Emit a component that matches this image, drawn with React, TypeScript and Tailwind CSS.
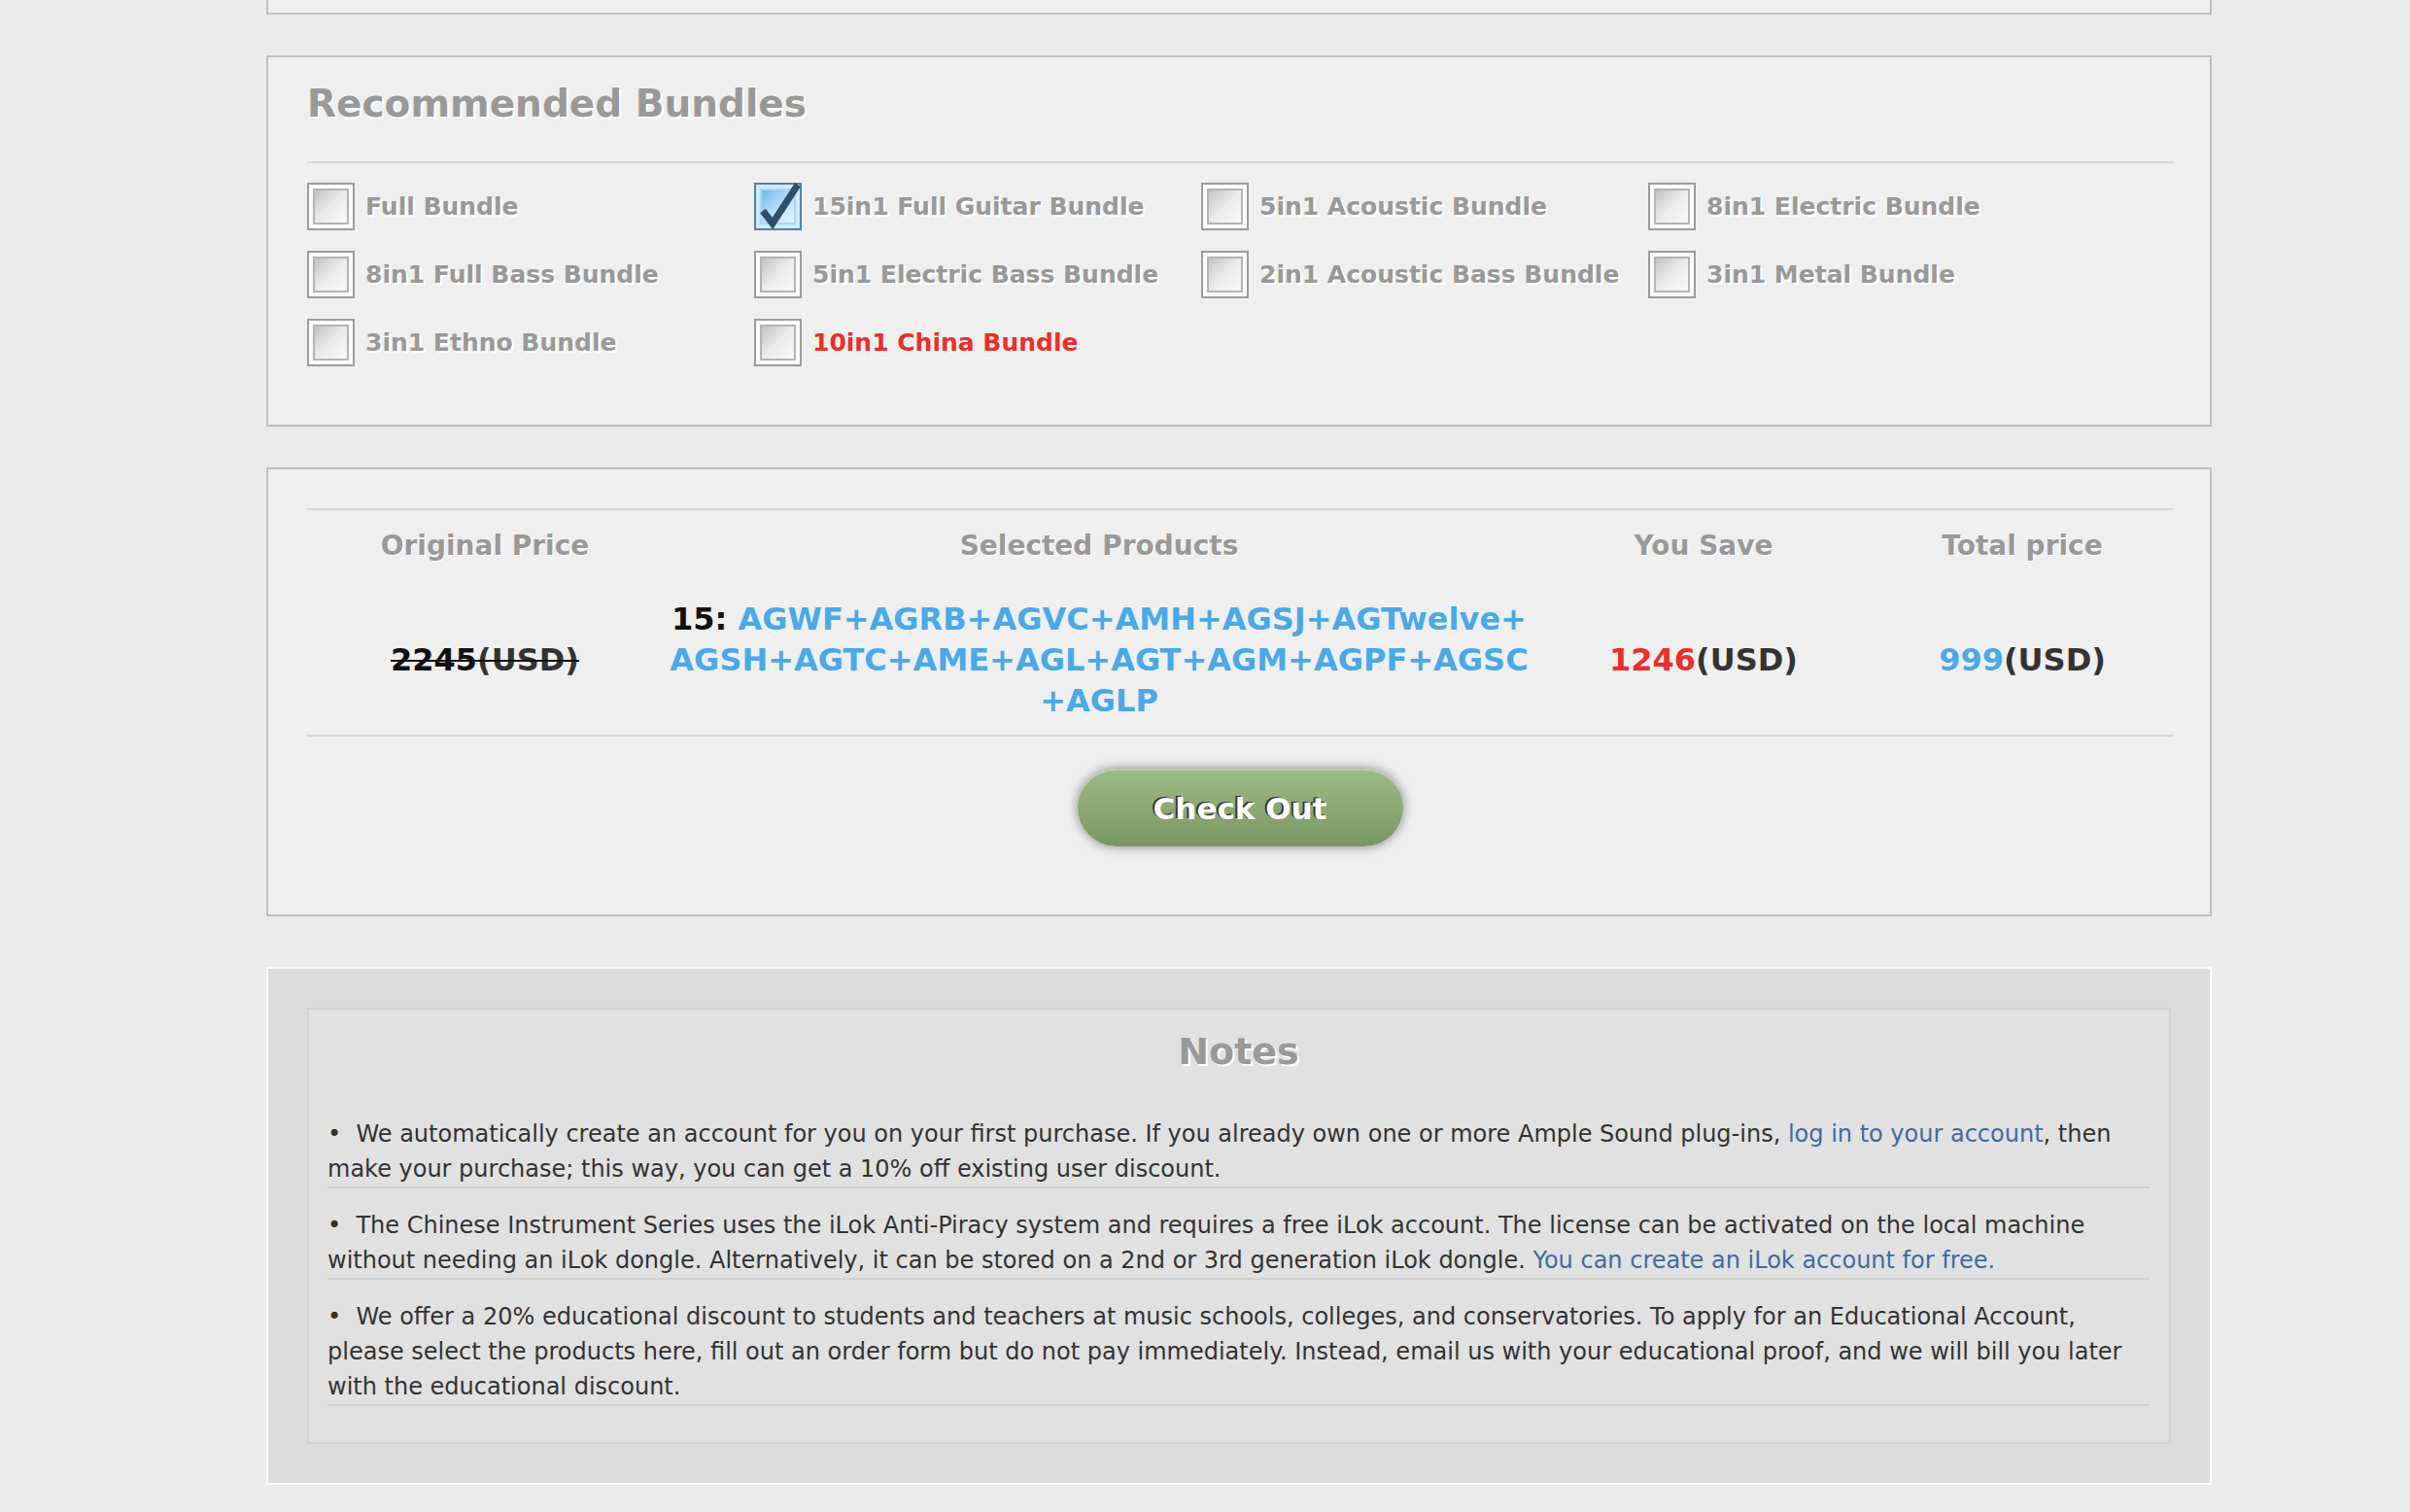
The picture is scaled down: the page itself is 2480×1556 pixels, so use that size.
import React from 'react'

type Bundle = { name: string; checked?: boolean; red?: boolean }

const BUNDLES: Bundle[] = [
  { name: 'Full Bundle' },
  { name: '15in1 Full Guitar Bundle', checked: true },
  { name: '5in1 Acoustic Bundle' },
  { name: '8in1 Electric Bundle' },
  { name: '8in1 Full Bass Bundle' },
  { name: '5in1 Electric Bass Bundle' },
  { name: '2in1 Acoustic Bass Bundle' },
  { name: '3in1 Metal Bundle' },
  { name: '3in1 Ethno Bundle' },
  { name: '10in1 China Bundle', red: true },
]

function Checkbox({ checked }: { checked?: boolean }) {
  if (checked) {
    return (
      <div className="relative h-[49px] w-[49px] shrink-0 border-2 border-[#5b7f9e] bg-[#cfe9fb] p-[4px]">
        <div className="h-full w-full border-2 border-[#a9d6f5] bg-gradient-to-br from-[#6fb6ef] via-[#b5dcfa] to-[#e6f6ff]" />
        <svg className="absolute -top-[6px] left-[2px] h-[52px] w-[46px]" viewBox="0 0 46 52" fill="none">
          <path d="M5 33 L15 46 L41 6" stroke="#2f4e6a" strokeWidth="7" strokeLinejoin="miter" strokeLinecap="butt" />
        </svg>
      </div>
    )
  }
  return (
    <div className="h-[49px] w-[49px] shrink-0 border-2 border-[#9c9c9c] bg-[#fbfbfb] p-[4px]">
      <div className="h-full w-full border-2 border-[#b4b4b4] bg-gradient-to-br from-[#c2c2c2] via-[#ececec] to-[#f8f8f8]" />
    </div>
  )
}

const NOTES_TEXT = 'text-[24px] leading-[36px] text-[#333]'
const LINK = 'text-[#3d6ca6]'

export default function App() {
  return (
    <div className="min-h-screen bg-[#ebebeb] pl-[274px] [font-family:'DejaVu_Sans',Verdana,sans-serif]">
      <div className="w-[2002px]">
        {/* previous panel (cut off) */}
        <div className="h-[15px] border-x-2 border-b-2 border-[#c0c0c0] bg-[#efefef]" />

        {/* Recommended bundles */}
        <div className="mt-[42px] border-2 border-[#bfbfbf] bg-[#efefef] pb-[60px] pl-[40px] pr-[36px] pt-[22px]">
          <h2 className="text-[39px] font-bold leading-[52px] text-[#999] [text-shadow:2px_2px_0_#fff]">Recommended Bundles</h2>
          <div className="mt-[33px] h-[2px] bg-[#d7d7d7]" />
          <div className="mt-[20px] grid grid-cols-[repeat(4,460px)] gap-y-[21px]">
            {BUNDLES.map(b => (
              <label key={b.name} className="flex items-center gap-[11px]">
                <Checkbox checked={b.checked} />
                <span
                  className={`whitespace-nowrap text-[25px] font-bold ${b.red ? 'text-[#e8302a]' : 'text-[#999] [text-shadow:2px_2px_0_#fff]'}`}
                >
                  {b.name}
                </span>
              </label>
            ))}
          </div>
        </div>

        {/* Price summary */}
        <div className="mt-[42px] border-2 border-[#bfbfbf] bg-[#efefef] pb-[70px] pl-[40px] pr-[38px] pt-[40px]">
          <div className="border-y-2 border-[#d5d5d5]">
            <div className="grid grid-cols-[366px_898px_346px_310px] pt-[20px] text-center text-[28px] font-bold leading-[33px] text-[#999] [text-shadow:1px_1px_0_#fff]">
              <div>Original Price</div>
              <div>Selected Products</div>
              <div>You Save</div>
              <div>Total price</div>
            </div>
            <div className="grid grid-cols-[366px_898px_346px_310px] items-center pb-[14px] pt-[38px] text-center text-[32px] font-bold leading-[42px]">
              <div>
                <span className="text-[#111] line-through decoration-[#111] decoration-2">
                  2245<span className="text-[#333]">(USD)</span>
                </span>
              </div>
              <div className="text-[#4aa9e7]">
                <span className="text-[#111]">15:</span> AGWF+AGRB+AGVC+AMH+AGSJ+AGTwelve+
                <br />
                AGSH+AGTC+AME+AGL+AGT+AGM+AGPF+AGSC
                <br />
                +AGLP
              </div>
              <div>
                <span className="text-[#e8302a]">1246</span>
                <span className="text-[#333]">(USD)</span>
              </div>
              <div>
                <span className="text-[#4aa9e7]">999</span>
                <span className="text-[#333]">(USD)</span>
              </div>
            </div>
          </div>
          <div className="mt-[33px] flex justify-center">
            <button className="h-[80px] w-[335px] rounded-full border-t-2 border-[#b5cca2] bg-gradient-to-b from-[#9dbb86] to-[#789763] text-[31px] font-bold text-white shadow-[0_0_12px_rgba(0,0,0,0.45)] [text-shadow:-2px_-1px_0_#333]">
              Check Out
            </button>
          </div>
        </div>

        {/* Notes */}
        <div className="mt-[52px] border-2 border-[#fbfbfb] bg-[#dcdcdc] p-[40px]">
          <div className="border-2 border-[#d3d3d3] bg-[#e1e1e1] pb-[37px] pl-[19px] pr-[20px] pt-[18px]">
            <h3 className="text-center text-[38px] font-bold leading-[50px] text-[#999] [text-shadow:2px_2px_0_#fff]">Notes</h3>
            <ul className="mt-[22px]">
              <li className={`border-b-2 border-[#d2d2d2] pt-[20px] ${NOTES_TEXT}`}>
                •&nbsp; We automatically create an account for you on your first purchase. If you already own one or more Ample Sound plug-ins,{' '}
                <a className={LINK}>log in to your account</a>, then
                <br />
                make your purchase; this way, you can get a 10% off existing user discount.
              </li>
              <li className={`border-b-2 border-[#d2d2d2] pt-[20px] ${NOTES_TEXT}`}>
                •&nbsp; The Chinese Instrument Series uses the iLok Anti-Piracy system and requires a free iLok account. The license can be activated on the local machine
                <br />
                without needing an iLok dongle. Alternatively, it can be stored on a 2nd or 3rd generation iLok dongle.{' '}
                <a className={LINK}>You can create an iLok account for free.</a>
              </li>
              <li className={`border-b-2 border-[#d2d2d2] pt-[20px] ${NOTES_TEXT}`}>
                •&nbsp; We offer a 20% educational discount to students and teachers at music schools, colleges, and conservatories. To apply for an Educational Account,
                <br />
                please select the products here, fill out an order form but do not pay immediately. Instead, email us with your educational proof, and we will bill you later
                <br />
                with the educational discount.
              </li>
            </ul>
          </div>
        </div>
      </div>
    </div>
  )
}
